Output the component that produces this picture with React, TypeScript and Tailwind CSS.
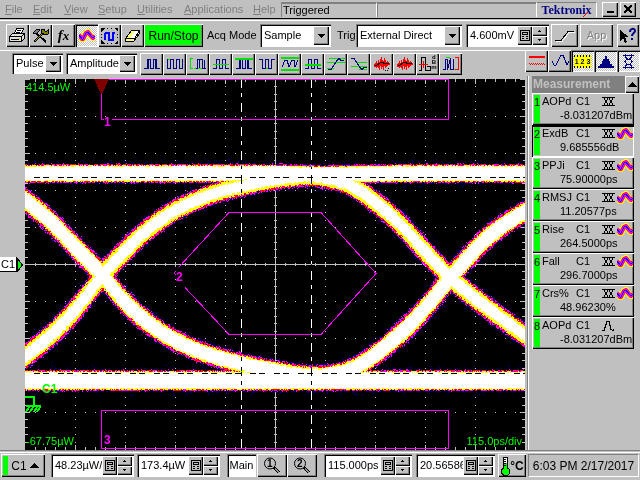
import React from "react";

const raised =
  "bg-[#c0c0c0] shadow-[inset_1px_1px_0_#fff,inset_-1px_-1px_0_#000,inset_-2px_-2px_0_#808080]";
const sunken =
  "shadow-[inset_1px_1px_0_#808080,inset_2px_2px_0_#000,inset_-1px_-1px_0_#fff]";
const checked =
  "bg-[repeating-conic-gradient(#fff_0_25%,#c0c0c0_0_50%)] bg-[length:2px_2px] shadow-[inset_1px_1px_0_#808080,inset_2px_2px_0_#000,inset_-1px_-1px_0_#fff]";

const NAVY = "#000080";
const GREEN = "#00e000";
const RED = "#ff0000";

/* ---------- eye diagram data ---------- */

const W = 500;
const H = 371;

type Trace = { half: number; white: number; points: [number, number][] };

// Trace centre lines, in plot coordinates (x right, y down).
const TRACES: Trace[] = [
  { half: 8, white: 1, points: [[0, 94], [250, 94], [290, 95], [380, 94], [500, 94]] },
  { half: 9, white: 1, points: [[0, 301], [150, 301], [290, 301], [400, 301], [500, 301]] },
  {
    half: 8,
    white: 1.5,
    points: [[-10, 114], [0, 121], [25, 142], [50, 168], [78, 197], [100, 223], [125, 245], [150, 261], [180, 274], [215, 284], [255, 292], [287, 296], [315, 293], [335, 285], [355, 271], [375, 254], [395, 234], [426, 197], [455, 165], [475, 148], [500, 132], [510, 127]],
  },
  {
    half: 8,
    white: 2.5,
    points: [[-10, 286], [0, 277], [25, 256], [50, 230], [78, 195], [105, 166], [125, 148], [150, 131], [175, 119], [195, 112], [216, 107], [245, 101], [285, 97], [310, 101], [325, 106], [345, 119], [375, 145], [395, 167], [426, 199], [455, 223], [475, 238], [500, 256], [510, 261]],
  },
];

function sample(points: [number, number][], x: number): [number, number] {
  let i = 0;
  while (i < points.length - 2 && x > points[i + 1][0]) i++;
  const slope = (k: number) => {
    const a = points[Math.max(0, k - 1)];
    const b = points[Math.min(points.length - 1, k + 1)];
    return (b[1] - a[1]) / (b[0] - a[0]);
  };
  const [x0, y0] = points[i];
  const [x1, y1] = points[i + 1];
  const h = x1 - x0;
  const t = (x - x0) / h;
  const t2 = t * t;
  const t3 = t2 * t;
  const y =
    (2 * t3 - 3 * t2 + 1) * y0 +
    (t3 - 2 * t2 + t) * h * slope(i) +
    (-2 * t3 + 3 * t2) * y1 +
    (t3 - t2) * h * slope(i + 1);
  return [y, slope(i) * (1 - t) + slope(i + 1) * t];
}

function makeRandom(seed: number) {
  let s = seed;
  return () => {
    s = (s + 0x6d2b79f5) | 0;
    let t = Math.imul(s ^ (s >>> 15), 1 | s);
    t = (t + Math.imul(t ^ (t >>> 7), 61 | t)) ^ t;
    return ((t ^ (t >>> 14)) >>> 0) / 4294967296;
  };
}

const LAYERS = ["#ffffff", "#ffff00", "#ff0000", "#ff00ff", "#000080"];

// Classifies each pixel by its distance from the nearest trace and merges
// equal neighbours of a row into runs, one path for each colour.
function buildEye(): string[] {
  const random = makeRandom(7);
  const curves = TRACES.map((trace) =>
    Array.from({ length: W }, (_, x) => {
      const [y, m] = sample(trace.points, x);
      return [y, 1 / Math.sqrt(1 + m * m)];
    }),
  );
  const paths = LAYERS.map(() => "");
  for (let y = 60; y < 330; y++) {
    let last = -1;
    let start = 0;
    for (let x = 0; x <= W; x++) {
      let level = -1;
      if (x < W) {
        let best = 99;
        let white = 2;
        let spread = 1;
        curves.forEach((curve, k) => {
          const e = Math.abs(y - curve[x][0]) * curve[x][1] - TRACES[k].half;
          if (e < best) {
            best = e;
            white = TRACES[k].white;
            spread = k < 2 ? 0.6 : 1;
          }
        });
        const r = random();
        const q = random();
        if (best < 8) {
          const e = best + (r - 0.5) * 1.8 * spread;
          if (e < -white) level = 0;
          else if (e < 0) level = 1;
          else if (e < 0.9 * spread + 0.1) level = q < 0.75 ? 2 : 3;
          else if (e < 2 * spread) level = q < 0.7 ? 3 : q < 0.85 ? 2 : 4;
          else if (e < 3.2 * spread) level = q < 0.35 ? 4 : q < 0.5 ? 3 : -1;
          else if (e < 6) level = q < 0.05 ? 4 : -1;
        }
      }
      if (level !== last) {
        if (last >= 0) paths[last] += `M${start} ${y}h${x - start}v1h${start - x}z`;
        last = level;
        start = x;
      }
    }
  }
  return paths;
}

const EYE = buildEye();

function buildGrid() {
  let d = "";
  const dot = (x: number, y: number, w = 1, h = 1) => {
    d += `M${x} ${y}h${w}v${h}h${-w}z`;
  };
  for (let j = 0; j < 50; j++) {
    const y = Math.round(j * 7.4);
    const major = j % 5 === 0;
    for (let i = 1; i < 10; i++) dot(i * 50, y);
    dot(0, y, major ? 5 : 3);
    dot(major ? W - 5 : W - 3, y, 5);
    dot(249, y, 3);
  }
  for (let i = 1; i < 50; i++) {
    const x = i * 10;
    const major = i % 5 === 0;
    for (let j = 1; j < 10; j++) dot(x, j * 37);
    dot(x, 0, 1, major ? 5 : 3);
    dot(x, major ? H - 5 : H - 3, 1, 5);
    dot(x, major ? 183 : 184, 1, major ? 5 : 3);
  }
  dot(0, 185, W);
  dot(250, 0, 1, H);
  return d;
}

const GRID = buildGrid();

/* ---------- icons ---------- */

function Art({ children, w = 18, h = 16 }: { children: React.ReactNode; w?: number; h?: number }) {
  return (
    <svg width={w} height={h} viewBox={`0 0 ${w} ${h}`} fill="none" shapeRendering="crispEdges" aria-hidden="true" className="shrink-0">
      {children}
    </svg>
  );
}

function WaveDb() {
  const p = "M0 6L3 10L4 10L7 4L9 3L12 7L14 9L16 7";
  return (
    <Art w={16} h={14}>
      <g strokeLinejoin="round">
        <path d={p} stroke="#ffff00" strokeWidth="6" />
        <path d={p} stroke="#ff0000" strokeWidth="4" shapeRendering="auto" />
        <path d={p} stroke="#ff00ff" strokeWidth="3" shapeRendering="auto" />
        <path d={p} stroke="#0000ff" strokeWidth="1" />
      </g>
    </Art>
  );
}

function EyeMask() {
  return (
    <Art w={13} h={9}>
      <path d="M0 .5h13M0 8.500h13M2.500 1v1l3 5v1M5.500 1v1l-3 5v1M7.500 1v1l3 5v1M10.500 1v1l-3 5v1" stroke="#000" />
    </Art>
  );
}

function Pulse() {
  return (
    <Art w={13} h={12}>
      <path d="M0 10.500h2L5 1.500h2l2 8 2 1 1-1" stroke="#000" />
    </Art>
  );
}

function Printer() {
  return (
    <Art w={17} h={15}>
      <path d="M5.500 5.500l2-5h7l-2 5" fill="#fff" stroke="#000" />
      <path d="M8 2.500h4M7 4.500h4" stroke="#000" />
      <path d="M.5 8.500l3-3h12v5l-3 3h-12z" fill="#e0e0e0" stroke="#000" />
      <path d="M.5 8.500h12v5M12.500 8.500l3-3M2 11.500h8" stroke="#000" />
      <path d="M9 10.500h2" stroke="#e0e000" />
    </Art>
  );
}

function Tools() {
  return (
    <Art w={17} h={15}>
      <path d="M4 5L14 14" stroke="#000" strokeWidth="2" />
      <path d="M1 5l4-4 3 1-4 4z" fill="#808080" stroke="#000" />
      <path d="M2 14L11 5" stroke="#000" strokeWidth="2" />
      <path d="M3 13L11 5" stroke="#a0a000" />
      <path d="M10 5l-1-3 3-1 1 2 2 0 1-1 0 4-3 1z" fill="#808000" stroke="#000" />
    </Art>
  );
}

function Expand() {
  return (
    <Art w={17} h={16}>
      <path d="M0 0h4L0 4zM17 0h-4l4 4zM0 16h4L0 12zM17 16h-4l4-4z" fill="#000" />
      <path d="M6 .5h1M10 .5h1M6 15.500h1M10 15.500h1M.5 6v1M.5 9v1M16.500 6v1M16.500 9v1" stroke="#000" />
      <path d="M4 12V5M4 5h4v7h4V4M12 5h2" stroke="#0000ff" strokeWidth="2" />
    </Art>
  );
}

function Eraser() {
  return (
    <Art w={16} h={13}>
      <path d="M.5 9.500l6-8h8l-5 8z" fill="#fff" stroke="#000" />
      <path d="M.5 9.500v3h8l6-8v-3l-5 8z" fill="#ffff80" stroke="#000" />
      <path d="M2 9L7 2h3L5 9z" fill="#ffff60" />
    </Art>
  );
}

function Slope() {
  return (
    <Art w={20} h={12}>
      <path d="M0 10.500h6l7-9h7" stroke="#fff" transform="translate(1 1)" />
      <path d="M0 10.500h6l7-9h6" stroke="#000" />
    </Art>
  );
}

function HelpPointer() {
  return (
    <Art w={18} h={17}>
      <path d="M1 3v11l3-3 2 5 2-1-2-5h4z" fill="#000" />
      <path d="M11 5c0-4 5-4 5-1 0 2-3 2-3 5M13 11v2" stroke={NAVY} strokeWidth="2" shapeRendering="auto" />
    </Art>
  );
}

function Keypad() {
  return (
    <Art w={10} h={11}>
      <path d="M.5.5h9v10h-9z" stroke="#000" />
      <path d="M2.500 2.500h5v2h-5zM2 6.500h2M6 6.500h2M2 8.500h2M6 8.500h2" stroke="#000" />
    </Art>
  );
}

function Up({ small = false }: { small?: boolean }) {
  return small ? (
    <Art w={3} h={2}><path d="M1 0h1v1h1v1H0V1h1z" fill="#000" /></Art>
  ) : (
    <Art w={9} h={5}><path d="M4 0h1l4 5H0z" fill="#000" /></Art>
  );
}

function Down() {
  return <Art w={3} h={2}><path d="M0 0h3v1H2v1H1V1H0z" fill="#000" /></Art>;
}

function Magnifier({ n }: { n: string }) {
  return (
    <span className="relative inline-flex">
      <Art w={18} h={17}>
        <circle cx="7" cy="6.500" r="5.500" stroke="#000" shapeRendering="auto" />
        <path d="M11 10.500l5 5" stroke="#000" strokeWidth="3" />
        <path d="M12 11.500l4 4" stroke="#909090" />
      </Art>
      <span className="absolute top-0 left-1 text-[10px] leading-[13px] font-bold">{n}</span>
    </span>
  );
}

function Thermometer() {
  return (
    <Art w={10} h={20}>
      <path d="M3.500 12V1.500h4V12l2 2v3l-2 2h-4l-2-2v-3z" fill="#fff" stroke="#000" />
      <path d="M4 7h3v6h1l1 1v3l-2 2H4l-2-2v-3l2-1z" fill="#00ff00" />
      <path d="M4 3.500h2M4 5.500h2M4 7.500h2M4 9.500h2" stroke="#000" />
    </Art>
  );
}

const UPS = "M1 12.500h3.500v-9h3v9h3v-9h3v9H17";
const DOWNS = "M1 3.500h3.500v9h3v-9h3v9h3v-9H17";
const NOISE =
  "M1.500 8v3M2.500 7v4M3.500 5v7M4.500 7v4M5.500 4v8M6.500 6v8M7.500 3v7M8.500 1v12M9.500 4v7M10.500 5v9M11.500 2v8M12.500 4v8M13.500 6v5M14.500 5v5M15.500 6v3M16.500 7v2";

const MEASURE_ICONS: { label: string; art: React.ReactNode }[] = [
  { label: "High", art: <><path d="M4.500 3v9M13.500 3v9" stroke={GREEN} /><path d={UPS} stroke={NAVY} /><path d="M5.500 4v9M12.500 4v9" stroke={NAVY} /></> },
  { label: "Low", art: <><path d="M1 3.500h4M13 12h3" stroke={GREEN} /><path d="M1.500 3v9.500h3v-9h3v9h3v-9h3v9h3V3" stroke={NAVY} /></> },
  { label: "Gated", art: <><path d="M4 2.500H1.500v10H4M5 12.500h12" stroke={GREEN} /><path d="M7 12.500h1.500v-9h5v9H17M10.500 4v8M15.500 4v8" stroke={NAVY} /></> },
  { label: "Mean", art: <><path d={UPS} stroke={NAVY} /><path d="M1 8.500h16" stroke={GREEN} /></> },
  { label: "Maximum", art: <><path d={UPS} stroke={NAVY} /><path d="M0 2.500h18" stroke={GREEN} strokeWidth="2" /><path d="M5.500 4v9M12.500 4v9" stroke={NAVY} /></> },
  { label: "Minimum", art: <><path d={DOWNS} stroke={NAVY} /><path d="M4 12.500h10" stroke={GREEN} /><path d="M4 12.500h4M10 12.500h4" stroke={NAVY} /></> },
  { label: "Peak to peak", art: <><path d="M0 1.500h18M0 13.500h18" stroke={GREEN} strokeWidth="2" /><path d="M1 11l3-7 2 0 2 7 3-7 2 0 1 7 3-7" stroke={NAVY} /></> },
  { label: "RMS", art: <><path d={UPS} stroke={NAVY} /><path d="M1 8.500h16" stroke={GREEN} strokeWidth="2" /></> },
  { label: "Overshoot", art: <><path d="M2 2.500h16M0 6.500h18M0 12.500h7" stroke={GREEN} /><path d="M1 13.500h3l6-9 2-2 2 2h3" stroke={NAVY} /></> },
  { label: "Undershoot", art: <><path d="M6 6.500h11M1 10.500h16M9 13.500h8" stroke={GREEN} /><path d="M1 2.500h3l6 9 2 2 2-2h3" stroke={NAVY} /></> },
  { label: "Noise", art: <><path d={NOISE} stroke={RED} /><path d="M2 9h2l5-3 3 2 4-1" stroke="#000" /><path d="M12 14.500h2l2-2" stroke="#000" strokeDasharray="1 1" /></> },
  { label: "RMS noise", art: <><path d={NOISE} stroke={RED} /><path d="M2 9h2l5-3 3 2 4-1" stroke="#000" /></> },
  { label: "Average power dBm", art: <><path d="M0 14.500h2.500V1.500h4v13H11M8 10.500h3v4" stroke="#000" /><path d="M0 8.500h9M4.500 5v7" stroke={RED} /></> },
  { label: "Signal to noise", art: <><path d="M4 1.500h4M9 13.500h4" stroke={GREEN} /><path d="M1 13.500h2.500v-10h2v10l3-11v11h3v-11" stroke={NAVY} /><path d="M13 1.500h3.500v12H13" stroke={RED} /></> },
];

/* ---------- controls ---------- */

function IconButton({ label, className, children, active = false }: { label: string; className: string; children: React.ReactNode; active?: boolean }) {
  return (
    <button type="button" aria-label={label} aria-pressed={active || undefined} className={`flex shrink-0 items-center justify-center overflow-hidden ${active ? checked : raised} ${className}`}>
      {children}
    </button>
  );
}

function Dropdown({ label, value, className }: { label: string; value: string; className: string }) {
  return (
    <div className={`relative shrink-0 bg-white p-[2px] ${sunken} ${className}`}>
      <select aria-label={label} className="block h-full w-full appearance-none bg-transparent pl-[2px] outline-none">
        <option>{value}</option>
      </select>
      <span className={`pointer-events-none absolute inset-y-[2px] right-[2px] flex w-4 items-center justify-center ${raised}`}>
        <Art w={7} h={4}><path d="M0 0h7L4 4H3z" fill="#000" /></Art>
      </span>
    </div>
  );
}

function NumberBox({ label, value, className }: { label: string; value: string; className: string }) {
  return (
    <div className={`flex shrink-0 bg-white p-[2px] ${sunken} ${className}`}>
      <input type="text" aria-label={label} defaultValue={value} className="w-0 min-w-0 flex-1 bg-transparent pl-[2px] outline-none" />
      <IconButton label={`${label} keypad`} className="w-[15px]"><Keypad /></IconButton>
      <div className="flex w-[15px] flex-col">
        <IconButton label={`Increase ${label}`} className="min-h-0 flex-1"><Up small /></IconButton>
        <IconButton label={`Decrease ${label}`} className="min-h-0 flex-1"><Down /></IconButton>
      </div>
    </div>
  );
}

const MENUS: [string, string][] = [
  ["File", "w-7"],
  ["Edit", "w-[31px]"],
  ["View", "w-[34px]"],
  ["Setup", "w-[39px]"],
  ["Utilities", "w-[47px]"],
  ["Applications", "w-[69px]"],
  ["Help", "w-7"],
];

function MenuBar() {
  return (
    <header className="flex h-[19px] items-center border-b border-black pl-[5px] text-[#808080]">
      <nav className="flex">
        {MENUS.map(([name, width]) => (
          <button key={name} type="button" className={`shrink-0 text-left leading-4 ${width}`}>
            <span className="underline">{name[0]}</span>{name.slice(1)}
          </button>
        ))}
      </nav>
      <p className="h-[15px] w-[96px] border-t-2 border-r border-l border-t-[#808080] border-r-white border-l-[#808080] pl-px leading-[13px] text-black">Triggered</p>
      <div className="h-[15px] flex-1 border-t-2 border-l border-[#808080]" />
      <div className="flex h-[15px] w-[61px] items-center justify-center border-t border-r border-l border-t-[#808080] border-r-white border-l-white font-['Liberation_Serif',serif] text-[12px] leading-[14px] font-bold text-[#000080]">
        <span className="relative">
          Tektronix
          <svg className="absolute right-1 bottom-0" width="5" height="5" viewBox="0 0 5 5" aria-hidden="true"><path d="M0 5L5 0" stroke="#ff0000" strokeWidth="1" /></svg>
        </span>
      </div>
      <IconButton label="Minimize" className="ml-[5px] h-[15px] w-4"><Art w={8} h={8}><path d="M1 7h7" stroke="#000" strokeWidth="2" /></Art></IconButton>
      <IconButton label="Close" className="mr-1 ml-[2px] h-[15px] w-4"><Art w={8} h={8}><path d="M0 0l8 8M8 0L0 8" stroke="#000" strokeWidth="2" /></Art></IconButton>
    </header>
  );
}

function Toolbar() {
  return (
    <div className="mt-px flex h-[30px] items-center border-t border-white pl-[6px]">
      <IconButton label="Print" className="h-[23px] w-[23px]"><Printer /></IconButton>
      <IconButton label="Setup" className="h-[23px] w-[23px]"><Tools /></IconButton>
      <IconButton label="Define math" className="h-[23px] w-[23px]"><i className="font-['Liberation_Serif',serif] text-[15px] leading-4 font-bold">f<span className="text-[13px]">x</span></i></IconButton>
      <IconButton label="Waveform database" className="h-[23px] w-[23px]" active><WaveDb /></IconButton>
      <IconButton label="Autoset" className="h-[23px] w-[23px]"><Expand /></IconButton>
      <IconButton label="Clear data" className="h-[23px] w-[23px]"><Eraser /></IconButton>
      <button type="button" className="h-[23px] w-[59px] shrink-0 bg-[#00ff00] text-[12px] shadow-[inset_1px_1px_0_#fff,inset_-1px_-1px_0_#000,inset_-2px_-2px_0_#808080]">Run/Stop</button>
      <span className="w-[57px] shrink-0 pl-1">Acq Mode</span>
      <Dropdown label="Acq Mode" value="Sample" className="h-[23px] w-[71px]" />
      <span className="w-[25px] shrink-0 pl-[6px]">Trig</span>
      <Dropdown label="Trigger source" value="External Direct" className="h-[23px] w-[106px]" />
      <NumberBox label="Trigger level" value="4.600mV" className="ml-1 h-[23px] w-[83px]" />
      <IconButton label="Trigger slope" className="ml-[2px] h-[23px] w-[27px]"><Slope /></IconButton>
      <button type="button" disabled className={`ml-[2px] h-[23px] w-[33px] shrink-0 text-[#808080] [text-shadow:1px_1px_0_#fff] ${raised}`}>App</button>
      <IconButton label="Help pointer" className="ml-1 h-[23px] w-[22px]"><HelpPointer /></IconButton>
    </div>
  );
}

function MeasureBar() {
  return (
    <div className="flex h-[26px] items-start justify-between">
      <div className="flex h-[26px] flex-1 items-center border-t border-white pl-3">
        <Dropdown label="Measurement type" value="Pulse" className="h-[21px] w-[51px]" />
        <Dropdown label="Measurement category" value="Amplitude" className="ml-[3px] h-[21px] w-[71px]" />
        <div className="ml-[3px] flex">
          {MEASURE_ICONS.map(({ label, art }) => (
            <IconButton key={label} label={label} className="h-[22px] w-[23px]">
              <span className="relative inline-flex">
                <Art>{art}</Art>
                {label.endsWith("dBm") && (
                  <span className="absolute -top-px right-0 flex flex-col text-[6px] leading-[5px] font-bold"><span>d</span><span>B</span><span>m</span></span>
                )}
              </span>
            </IconButton>
          ))}
        </div>
      </div>
      <div className="flex">
        <IconButton label="Vertical cursors" className="h-[22px] w-[23px]"><Art><path d="M1 4h16" stroke={RED} strokeWidth="2" /><path d="M1 10.500h16" stroke={RED} strokeDasharray="1 1" /><path d="M2 11.500h15" stroke={RED} strokeDasharray="1 1" /></Art></IconButton>
        <IconButton label="Waveform" className="h-[22px] w-[23px]"><Art><path d="M1 8l2 4 2 0 5-10 2 0 4 10 2-4" stroke={NAVY} /></Art></IconButton>
        <IconButton label="Measurements" className="h-[22px] w-[23px]" active>
          <span className="relative h-[13px] w-[17px] bg-[#ffff00] text-center text-[7px] leading-[14px] font-bold">1 2 3
            <svg className="absolute inset-0" width="17" height="13" viewBox="0 0 17 13" shapeRendering="crispEdges" aria-hidden="true"><path d="M0 1h17M0 12h17" stroke="#000" strokeWidth="2" strokeDasharray="1 2" /></svg>
          </span>
        </IconButton>
        <IconButton label="Histogram" className="h-[22px] w-[23px]" active><Art w={16} h={13}><path d="M0 13v-2h2V9h2V6h1V4h2V1h2v3h2v2h1v3h2v2h2v2z" fill={NAVY} /></Art></IconButton>
        <IconButton label="Mask test" className="h-[22px] w-[23px]" active><Art w={13} h={15}><path d="M1 1.500h11M1 13.500h11M3.500 0v3l2 2h2l2-2V0M3.500 15v-3l2-2h2l2 2v3M5 5l-2 2.500L5 10M8 5l2 2.500L8 10" stroke={NAVY} /></Art></IconButton>
      </div>
    </div>
  );
}

function Plot() {
  return (
    <figure className="relative min-w-0 flex-1 overflow-hidden bg-black text-[#00ff00]">
      <svg className="absolute inset-0 h-full w-full" viewBox="0 0 500 371" preserveAspectRatio="none" shapeRendering="crispEdges" fill="none" role="img" aria-label="Eye diagram">
        <path d={GRID} fill="#c0c0c0" />
        {EYE.map((d, i) => <path key={LAYERS[i]} d={d} fill={LAYERS[i]} />)}
        <g stroke="#ff00ff">
          <path d="M84 .5h339.500v40H87M76.500 12v28.500H79" />
          <path d="M76.500 331.500h347v38h-347z" />
          <path d="M154 188l50-54.500h92l55 61-55 61h-92l-44-47" />
          <path d="M151 192l-2 2 2 2" />
        </g>
        <path d="M69 0h15l-7 15h-1z" fill="#800000" />
        <g stroke="#fff" className="mix-blend-difference">
          <path d="M216.500 0v371M286.500 0v371" strokeDasharray="9 5 4 6" />
          <path d="M9 98.500h491M9 294.500h491" strokeDasharray="6 3 6 9" />
        </g>
        <path d="M0 318h9v9M1 327h15M4 328l-3 5M8 328l-3 5M12 328l-3 5M15 328l-3 5" stroke="#00ff00" strokeWidth="2" />
      </svg>
      <span className="absolute top-[2px] left-px leading-3">414.5µW</span>
      <span className="absolute bottom-[3px] left-px leading-3">-67.75µW</span>
      <span className="absolute right-[3px] bottom-[3px] leading-3">115.0ps/div</span>
      <span className="absolute top-[304px] left-[17px] text-[12px] leading-3 font-bold">C1</span>
      <span className="absolute top-[37px] left-[79px] text-[12px] leading-3 font-bold text-[#ff00ff]">1</span>
      <span className="absolute top-[192px] left-[151px] text-[12px] leading-3 font-bold text-[#ff00ff]">2</span>
      <span className="absolute top-[355px] left-[79px] text-[12px] leading-3 font-bold text-[#ff00ff]">3</span>
    </figure>
  );
}

type Row = { name: string; value: string; kind: "both" | "mask" | "pulse" };

const ROWS: Row[] = [
  { name: "AOPd", value: "-8.031207dBm", kind: "mask" },
  { name: "ExdB", value: "9.685556dB", kind: "both" },
  { name: "PPJi", value: "75.90000ps", kind: "both" },
  { name: "RMSJ", value: "11.20577ps", kind: "both" },
  { name: "Rise", value: "264.5000ps", kind: "both" },
  { name: "Fall", value: "296.7000ps", kind: "both" },
  { name: "Crs%", value: "48.96230%", kind: "both" },
  { name: "AOPd", value: "-8.031207dBm", kind: "pulse" },
];

function Measurements() {
  return (
    <aside className="w-[113px] shrink-0 border-l border-[#808080]">
      <div className="h-full border-l border-white pl-[3px]">
        <div className="flex h-[17px]">
          <h2 className="flex-1 bg-[#808080] pl-px text-[12px] leading-[16px] font-bold text-[#c0c0c0]">Measurement</h2>
          <IconButton label="Collapse" className="mr-px h-[17px] w-[14px]"><Up /></IconButton>
        </div>
        <ol className="mr-[6px]">
          {ROWS.map((row, i) => (
            <li key={i}>
              <button
                type="button"
                className={`flex h-8 w-full p-[2px] text-left ${i === 1 ? "shadow-[inset_1px_2px_0_#000,inset_-1px_-1px_0_#fff]" : raised}`}
              >
                <span className="h-[28px] w-[6px] shrink-0 bg-[#00ff00] leading-[14px] whitespace-nowrap">{i + 1}</span>
                <span className="min-w-0 flex-1 pl-[2px] leading-[14px]">
                  <span className="flex h-[13px] leading-[13px]">
                    <span className="w-[34px] shrink-0">{row.name}</span>
                    <span className="w-[26px] shrink-0">C1</span>
                    <span className="flex w-[15px] shrink-0 items-center">{row.kind === "pulse" ? <Pulse /> : <EyeMask />}</span>
                    {row.kind === "both" && <span className="flex shrink-0 items-center"><WaveDb /></span>}
                  </span>
                  <span className="block pl-[18px]">{row.value}</span>
                </span>
              </button>
            </li>
          ))}
        </ol>
      </div>
    </aside>
  );
}

function StatusBar() {
  return (
    <footer className="mt-px flex h-7 items-start border-t border-white pt-px pl-px">
      <button type="button" className={`flex h-[23px] w-11 shrink-0 items-center p-[2px] ${raised}`}>
        <span className="h-full w-[5px] bg-[#00ff00]" />
        <span className="w-[22px] text-center text-[12px]">C1</span>
        <Up />
      </button>
      <NumberBox label="Vertical scale" value="48.23µW/div" className="ml-[6px] h-[23px] w-[83px]" />
      <NumberBox label="Vertical offset" value="173.4µW" className="ml-[3px] h-[23px] w-[83px]" />
      <button type="button" className={`ml-[7px] h-[23px] w-[29px] shrink-0 bg-white text-[11px] ${sunken}`}>Main</button>
      <IconButton label="Magnifier 1" className="ml-px h-[23px] w-[30px]"><Magnifier n="1" /></IconButton>
      <IconButton label="Magnifier 2" className="h-[23px] w-[30px]"><Magnifier n="2" /></IconButton>
      <NumberBox label="Horizontal scale" value="115.000ps" className="ml-[7px] h-[23px] w-[88px]" />
      <NumberBox label="Horizontal position" value="20.56586ns" className="ml-1 h-[23px] w-[79px]" />
      <IconButton label="Temperature" className="ml-[3px] h-[23px] w-7"><Thermometer /><span className="text-[12px] font-bold">°C</span></IconButton>
      <time className="mr-px ml-[2px] flex h-[23px] flex-1 items-center justify-center border border-t-[#808080] border-r-white border-b-white border-l-[#808080] text-[12px] whitespace-nowrap">6:03 PM 2/17/2017</time>
    </footer>
  );
}

export default function App() {
  return (
    <div className="flex min-h-screen flex-col overflow-hidden bg-[#c0c0c0] font-['Liberation_Sans',Arial,sans-serif] text-[11px] text-black">
      <MenuBar />
      <Toolbar />
      <MeasureBar />
      <main className="flex flex-1 border-b border-[#808080]">
        <div className="flex flex-1 pt-[3px]">
          <div className="flex w-[25px] shrink-0 items-center">
            <span className="w-[17px] border-r border-b border-black bg-white pl-px leading-[14px]">C1</span>
            <Art w={6} h={14}><path d="M.5.5L5.500 7 .5 13.500z" fill="#00ff00" stroke="#000" /></Art>
          </div>
          <Plot />
          <div className="w-[2px] shrink-0" />
        </div>
        <Measurements />
      </main>
      <StatusBar />
    </div>
  );
}
